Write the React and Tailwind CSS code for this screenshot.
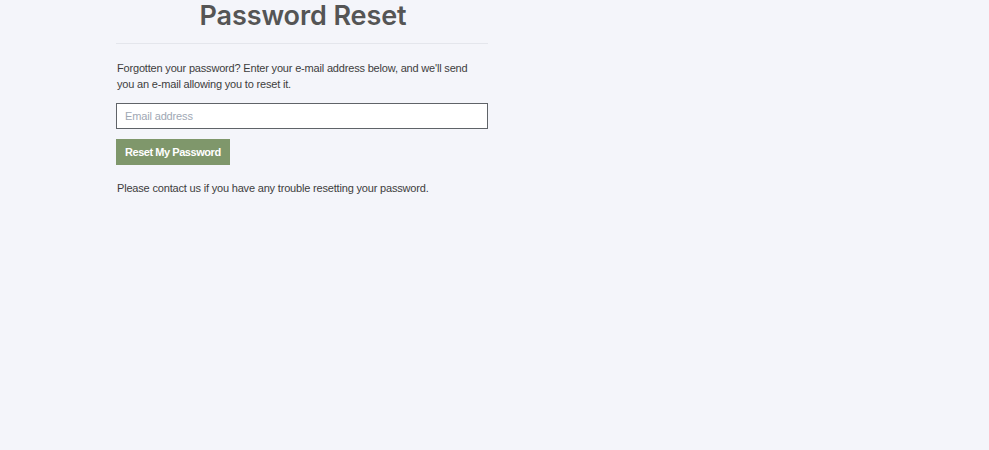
export default function App() {
  return (
    <div className="min-h-[450px] w-full bg-[#f4f5fa]" style={{ fontFamily: '"Liberation Sans", Arial, sans-serif' }}>
      <div className="ml-[116px] w-[372px]">
        <h1 className="text-center text-[27px] leading-[32px] font-semibold text-[#555555] pl-[2px] tracking-[-0.1px]" style={{ fontFamily: 'Inter, "Open Sans", sans-serif' }}>
          Password Reset
        </h1>
        <div className="mt-[11px] h-px bg-[#e4e6ec]" />
        <p className="mt-[16px] w-[362px] text-[11px] leading-[16px] text-[#3d3d3d] pl-px tracking-[-0.18px]">
          Forgotten your password? Enter your e-mail address below, and we'll send you an e-mail allowing you to reset it.
        </p>
        <input
          type="text"
          placeholder="Email address"
          className="mt-[11px] block w-full h-[26px] bg-white border border-[#5f6368] px-[8px] text-[11px] text-[#333] placeholder:text-[#a0a8b4] outline-none tracking-[-0.15px]"
        />
        <button className="mt-[10px] block h-[26px] px-[9px] bg-[#7f976b] text-white text-[11px] font-bold tracking-[-0.45px]">
          Reset My Password
        </button>
        <p className="mt-[15px] text-[11px] leading-[16px] text-[#3d3d3d] pl-px tracking-[-0.18px]">
          Please contact us if you have any trouble resetting your password.
        </p>
      </div>
    </div>
  );
}
